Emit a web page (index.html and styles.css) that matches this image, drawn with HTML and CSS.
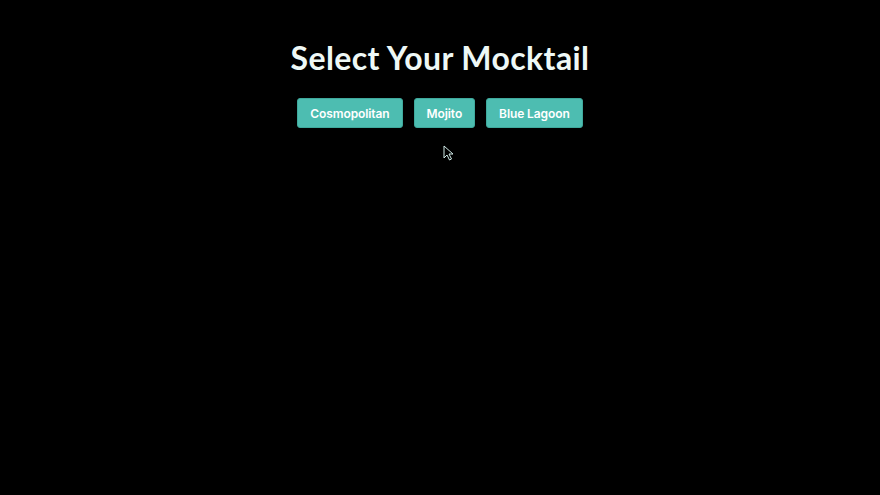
FILE: index.html
```html
<!DOCTYPE html>
<html>
<head>
<meta charset="utf-8">
<link rel="stylesheet" href="styles.css">
</head>
<body>
<main class="app">
  <h1 class="title">Select Your Mocktail</h1>
  <div class="choices">
    <button class="choice">Cosmopolitan</button>
    <button class="choice">Mojito</button>
    <button class="choice">Blue Lagoon</button>
  </div>
</main>
<svg class="cursor" width="12" height="16" viewBox="0 0 12 16"><path d="M1 1 L1 13 L4 10 L6.5 15 L8.5 14 L6 9 L10 9 Z" fill="#000" stroke="#cfe9e6" stroke-width="1"/></svg>
</body>
</html>
```
FILE: styles.css
```css
html, body { margin: 0; padding: 0; background: #000; height: 100%; }
body { position: relative; }
.app { display: flex; flex-direction: column; align-items: center; padding-top: 39px; }
.title {
  margin: 0;
  font-family: "Lato", "Noto Sans", sans-serif;
  font-weight: 700;
  font-size: 32px;
  line-height: 38px;
  color: #eef8f6;
  letter-spacing: 0.4px;
}
.choices { display: flex; gap: 11px; margin-top: 21px; }
.choice {
  height: 30px;
  padding: 0 12px;
  border: 1px solid #3fa99c;
  border-radius: 3px;
  background: #4dbdb1;
  color: #fff;
  font-family: "Inter", "Roboto", sans-serif;
  font-weight: 600;
  font-size: 12px;
  letter-spacing: -0.1px;
}
.cursor { position: absolute; left: 443px; top: 145px; }
```
